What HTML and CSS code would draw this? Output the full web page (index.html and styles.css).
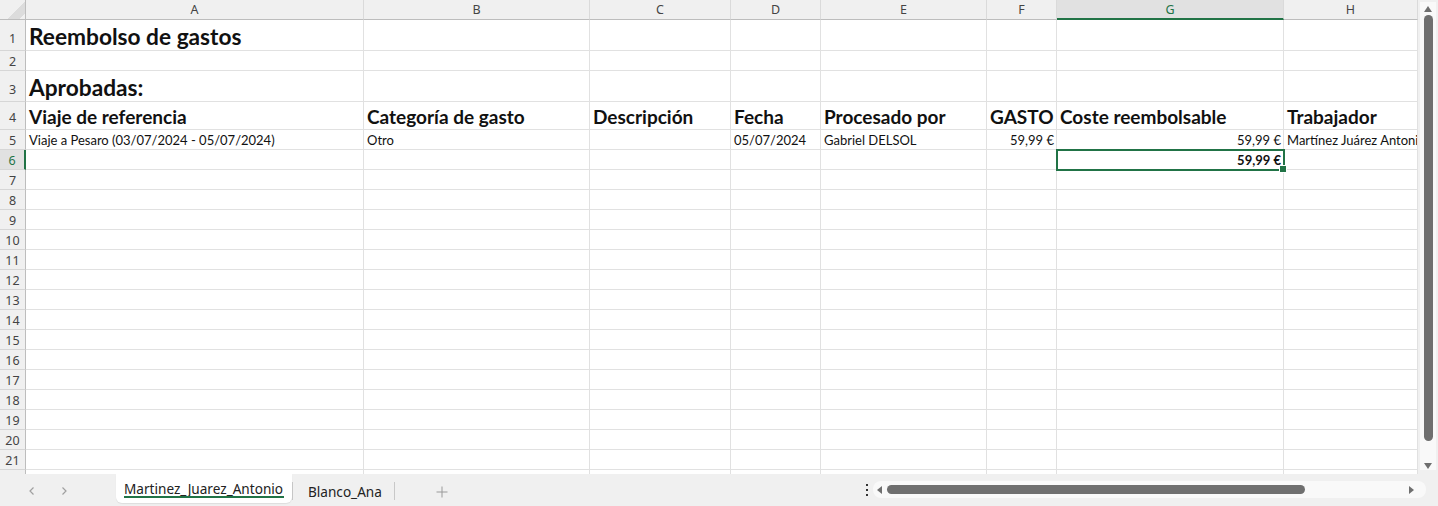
FILE: index.html
```html
<!DOCTYPE html>
<html lang="es">
<head>
    <meta charset="UTF-8">
    <title>Reembolso de gastos</title>
    <link rel="stylesheet" href="styles.css">
</head>
<body>
<div class="app">
    <div class="sheet-area">
        <div class="grid" id="grid">
            <div class="row head">
                <div class="cell corner"></div>
                <div class="cell col">A</div>
                <div class="cell col">B</div>
                <div class="cell col">C</div>
                <div class="cell col">D</div>
                <div class="cell col">E</div>
                <div class="cell col">F</div>
                <div class="cell col sel">G</div>
                <div class="cell col">H</div>
            </div>
            <div class="row h31">
                <div class="cell num">1</div>
                <div class="cell title">Reembolso de gastos</div>
                <div class="cell"></div><div class="cell"></div><div class="cell"></div><div class="cell"></div><div class="cell"></div><div class="cell"></div><div class="cell"></div>
            </div>
            <div class="row">
                <div class="cell num">2</div>
                <div class="cell"></div><div class="cell"></div><div class="cell"></div><div class="cell"></div><div class="cell"></div><div class="cell"></div><div class="cell"></div><div class="cell"></div>
            </div>
            <div class="row h31">
                <div class="cell num">3</div>
                <div class="cell title">Aprobadas:</div>
                <div class="cell"></div><div class="cell"></div><div class="cell"></div><div class="cell"></div><div class="cell"></div><div class="cell"></div><div class="cell"></div>
            </div>
            <div class="row h28">
                <div class="cell num">4</div>
                <div class="cell th">Viaje de referencia</div>
                <div class="cell th">Categoría de gasto</div>
                <div class="cell th">Descripción</div>
                <div class="cell th">Fecha</div>
                <div class="cell th">Procesado por</div>
                <div class="cell th">GASTO</div>
                <div class="cell th">Coste reembolsable</div>
                <div class="cell th">Trabajador</div>
            </div>
            <div class="row">
                <div class="cell num">5</div>
                <div class="cell">Viaje a Pesaro (03/07/2024 - 05/07/2024)</div>
                <div class="cell">Otro</div>
                <div class="cell"></div>
                <div class="cell">05/07/2024</div>
                <div class="cell">Gabriel DELSOL</div>
                <div class="cell right">59,99 €</div>
                <div class="cell right">59,99 €</div>
                <div class="cell">Martínez Juárez Antonio</div>
            </div>
            <div class="row">
                <div class="cell num sel">6</div>
                <div class="cell"></div><div class="cell"></div><div class="cell"></div><div class="cell"></div><div class="cell"></div><div class="cell"></div>
                <div class="cell right bold active">59,99 €</div>
                <div class="cell"></div>
            </div>
        </div>
        <div class="vscroll">
            <span class="arrow up"></span>
            <div class="vthumb"></div>
            <span class="arrow down"></span>
        </div>
    </div>
    <div class="tabbar">
        <div class="nav">
            <svg width="10" height="10" viewBox="0 0 10 10"><path d="M6.5 1.5 3 5l3.5 3.5" fill="none" stroke="#a0a0a0" stroke-width="1.2"/></svg>
            <svg width="10" height="10" viewBox="0 0 10 10"><path d="M3.5 1.5 7 5 3.5 8.5" fill="none" stroke="#a0a0a0" stroke-width="1.2"/></svg>
        </div>
        <div class="tabs">
            <div class="tab active">Martinez_Juarez_Antonio</div>
            <span class="sep"></span>
            <div class="tab">Blanco_Ana</div>
            <span class="sep"></span>
            <div class="add">
                <svg width="12" height="12" viewBox="0 0 12 12"><path d="M6 0.5v11M0.5 6h11" stroke="#9a9a9a" stroke-width="1"/></svg>
            </div>
        </div>
        <div class="more">
            <svg width="4" height="12" viewBox="0 0 4 12"><rect x="1" y="0" width="2" height="2" fill="#333"/><rect x="1" y="5" width="2" height="2" fill="#333"/><rect x="1" y="10" width="2" height="2" fill="#333"/></svg>
        </div>
        <div class="hscroll">
            <span class="arrow left"></span>
            <div class="hthumb"></div>
            <span class="arrow rightarr"></span>
        </div>
    </div>
</div>
<script src="script.js"></script>
</body>
</html>
```

FILE: script.js
```js
var grid = document.getElementById('grid');
for (var i = 7; i <= 22; i++) {
    var row = document.createElement('div');
    row.className = 'row';
    // la fila 22 apenas asoma, sin número visible
    var html = '<div class="cell num">' + (i < 22 ? i : '') + '</div>';
    for (var j = 0; j < 8; j++) {
        html += '<div class="cell"></div>';
    }
    row.innerHTML = html;
    grid.appendChild(row);
}
```

FILE: styles.css
```css
* {
    box-sizing: border-box;
}
html, body {
    margin: 0;
    height: 100%;
    overflow: hidden;
    background: #f0f0f0;
    font-family: "Lato", "Noto Sans", sans-serif;
}
.app {
    display: flex;
    flex-direction: column;
    height: 506px;
}
.sheet-area {
    display: flex;
    height: 474px;
    background: #fff;
}
.grid {
    width: 1418px;
    overflow: hidden;
}
.row {
    display: grid;
    grid-template-columns: 26px 338px 226px 141px 90px 166px 70px 227px 1fr;
    height: 20px;
}
.row.h31 { height: 31px; }
.row.h28 { height: 28px; }
.cell {
    border-right: 1px solid #e1e1e1;
    border-bottom: 1px solid #e1e1e1;
    overflow: hidden;
    white-space: nowrap;
    padding: 0 3px 1px;
    display: flex;
    align-items: flex-end;
    font-size: 13px;
    color: #111;
}
.cell.right {
    justify-content: flex-end;
    padding-right: 2px;
}
.cell.bold {
    font-weight: bold;
}
.cell.title {
    font-size: 22.7px;
    font-weight: bold;
    padding-bottom: 0;
    overflow: visible;
    line-height: 1.2;
}
.cell.th {
    font-size: 19px;
    font-weight: bold;
    padding-bottom: 0;
    line-height: 1.2;
}
.cell.active {
    position: relative;
    overflow: visible;
    outline: 2px solid #217346;
    outline-offset: -1px;
    z-index: 2;
}
.cell.active::after {
    content: "";
    position: absolute;
    right: -4px;
    bottom: -4px;
    width: 6px;
    height: 6px;
    background: #217346;
    border: 1px solid #fff;
}

/* cabeceras */
.head .cell {
    background: #f0f0f0;
    border-bottom: 1px solid #bdbdbd;
    border-right: 1px solid #dadada;
    justify-content: center;
    align-items: center;
    padding: 0;
    font-family: "Noto Sans", sans-serif;
    font-size: 12.5px;
    color: #444;
}
.head .cell.sel {
    background: #e1e1e1;
    border-bottom: 2px solid #217346;
    color: #217346;
}
.head .corner {
    background: linear-gradient(135deg, transparent 60%, #dcdcdc 60%, #dcdcdc 88%, transparent 88%) #f0f0f0;
    border-right: 1px solid #bdbdbd;
}
.cell.num {
    background: #f0f0f0;
    border-right: 1px solid #bdbdbd;
    border-bottom: 1px solid #d6d6d6;
    justify-content: center;
    align-items: center;
    padding: 1px 0 0;
    font-family: "Noto Sans", sans-serif;
    font-size: 12.5px;
    color: #444;
}
.cell.num.sel {
    border-right: 2px solid #217346;
    color: #217346;
    background: #e1e1e1;
}
.h31 .cell.num { padding-top: 6px; }
.h28 .cell.num { padding-top: 3px; }

/* scroll vertical */
.vscroll {
    width: 20px;
    padding: 2px 2px 4px;
    display: flex;
    flex-direction: column;
    align-items: center;
    background: linear-gradient(#f9f9f9, #f9f9f9) content-box, #f0f0f0;
}
.vthumb {
    width: 9px;
    flex: 0 0 426px;
    background: #6f6f6f;
    border-radius: 5px;
    margin: 3px 0 22px;
}
.arrow {
    width: 0;
    height: 0;
    display: block;
}
.arrow.up {
    margin-top: 4px;
    border-left: 4px solid transparent;
    border-right: 4px solid transparent;
    border-bottom: 6px solid #6f6f6f;
}
.arrow.down {
    border-left: 4px solid transparent;
    border-right: 4px solid transparent;
    border-top: 6px solid #6f6f6f;
}

/* barra de hojas */
.tabbar {
    flex: 1;
    display: flex;
    align-items: flex-start;
    background: #f0f0f0;
}
.nav {
    display: flex;
    gap: 22px;
    padding: 12px 0 0 27px;
    width: 116px;
}
.tabs {
    display: flex;
    align-items: flex-start;
    width: 745px;
}
.tab {
    height: 29px;
    padding: 5px 8px 0;
    font-family: "Noto Sans", sans-serif;
    font-size: 13.6px;
    color: #222;
    border-radius: 0 0 6px 6px;
}
.tab.active {
    background: #fff;
    width: 176px;
    position: relative;
    box-shadow: 0 1px 1px rgba(0, 0, 0, .08);
}
.tab.active::after {
    content: "";
    position: absolute;
    left: 8px;
    right: 8px;
    bottom: 5px;
    height: 2px;
    background: #217346;
}
.tab + .sep + .tab {
    padding: 8px 12px 0 15px;
}
.sep {
    width: 1px;
    height: 18px;
    margin-top: 8px;
    background: #c8c8c8;
}
.add {
    padding: 8px 0 0 41px;
}
.more {
    width: 12px;
    padding-top: 10px;
    display: flex;
    justify-content: center;
}
.hscroll {
    margin: 7px 0 0 0;
    width: 553px;
    height: 17px;
    background: #f9f9f9;
    border-radius: 8px;
    display: flex;
    align-items: center;
    padding: 0 12px 0 4px;
}
.hthumb {
    width: 418px;
    height: 9px;
    background: #6f6f6f;
    border-radius: 5px;
    margin-left: 5px;
    margin-right: auto;
}
.arrow.left {
    border-top: 4px solid transparent;
    border-bottom: 4px solid transparent;
    border-right: 5px solid #6f6f6f;
}
.arrow.rightarr {
    border-top: 4px solid transparent;
    border-bottom: 4px solid transparent;
    border-left: 5px solid #6f6f6f;
}
```
